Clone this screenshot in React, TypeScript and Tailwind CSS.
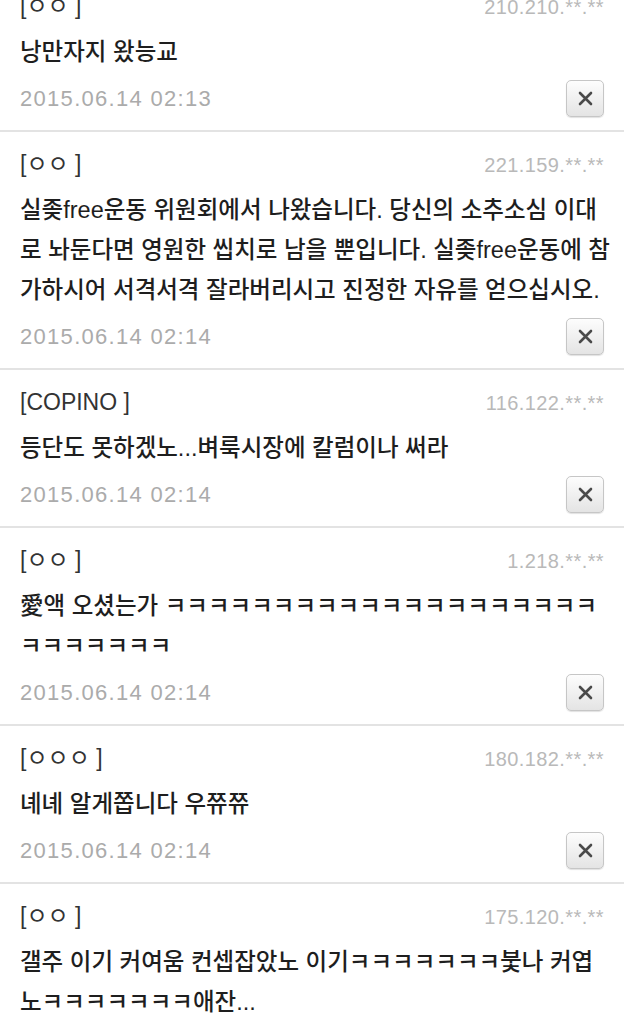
import React from "react";

type Comment = {
  name: string;
  ip: string;
  lines: string[];
  date: string;
};

const comments: Comment[] = [
  { name: "[ㅇㅇ ]", ip: "210.210.**.**", lines: ["낭만자지 왔능교"], date: "2015.06.14 02:13" },
  {
    name: "[ㅇㅇ ]",
    ip: "221.159.**.**",
    lines: [
      "실좆free운동 위원회에서 나왔습니다. 당신의 소추소심 이대",
      "로 놔둔다면 영원한 씹치로 남을 뿐입니다. 실좆free운동에 참",
      "가하시어 서격서격 잘라버리시고 진정한 자유를 얻으십시오.",
    ],
    date: "2015.06.14 02:14",
  },
  { name: "[COPINO ]", ip: "116.122.**.**", lines: ["등단도 못하겠노...벼룩시장에 칼럼이나 써라"], date: "2015.06.14 02:14" },
  {
    name: "[ㅇㅇ ]",
    ip: "1.218.**.**",
    lines: ["愛액 오셨는가 ㅋㅋㅋㅋㅋㅋㅋㅋㅋㅋㅋㅋㅋㅋㅋㅋㅋㅋㅋㅋ", "ㅋㅋㅋㅋㅋㅋㅋ"],
    date: "2015.06.14 02:14",
  },
  { name: "[ㅇㅇㅇ ]", ip: "180.182.**.**", lines: ["녜녜 알게쫍니다 우쮸쮸"], date: "2015.06.14 02:14" },
  {
    name: "[ㅇㅇ ]",
    ip: "175.120.**.**",
    lines: ["갤주 이기 커여움 컨셉잡았노 이기ㅋㅋㅋㅋㅋㅋㅋ붗나 커엽", "노ㅋㅋㅋㅋㅋㅋㅋ애잔..."],
    date: "2015.06.14 02:14",
  },
];

function XButton() {
  return (
    <button className="flex h-[37px] w-[38px] items-center justify-center rounded-[5px] border border-[#c6c6c6] bg-gradient-to-b from-[#fdfdfd] to-[#e4e4e4] shadow-[0_1px_1px_rgba(0,0,0,0.12)]">
      <svg width="15" height="15" viewBox="0 0 15 15">
        <path d="M2 2 L13 13 M13 2 L2 13" stroke="#4a4a4a" strokeWidth="2.6" strokeLinecap="round" />
      </svg>
    </button>
  );
}

function Item({ c }: { c: Comment }) {
  return (
    <div className="border-b-2 border-[#e3e3e3] px-[20px] pb-[10px] pt-[16px]">
      <div className="flex h-[32px] items-baseline justify-between">
        <span className="text-[23px] leading-[32px] text-[#333]">{c.name}</span>
        <span className="text-[20px] leading-[32px] tracking-[0.4px] text-[#b9b9b9]">{c.ip}</span>
      </div>
      <div className="mt-[10px] text-[23.5px] font-medium leading-[40px] text-[#1e1e1e]">
        {c.lines.map((l, i) => (
          <div key={i} className="whitespace-nowrap">
            {l}
          </div>
        ))}
      </div>
      <div className="mt-[4px] flex h-[44px] items-center justify-between">
        <span className="text-[22px] tracking-[1.3px] text-[#ababab]">{c.date}</span>
        <XButton />
      </div>
    </div>
  );
}

export default function App() {
  return (
    <div
      className="h-[1024px] w-[624px] overflow-hidden bg-white"
      style={{ fontFamily: '"Liberation Sans", "Noto Sans CJK KR", sans-serif' }}
    >
      <div className="mt-[-26px]">
        {comments.map((c, i) => (
          <Item key={i} c={c} />
        ))}
      </div>
    </div>
  );
}
